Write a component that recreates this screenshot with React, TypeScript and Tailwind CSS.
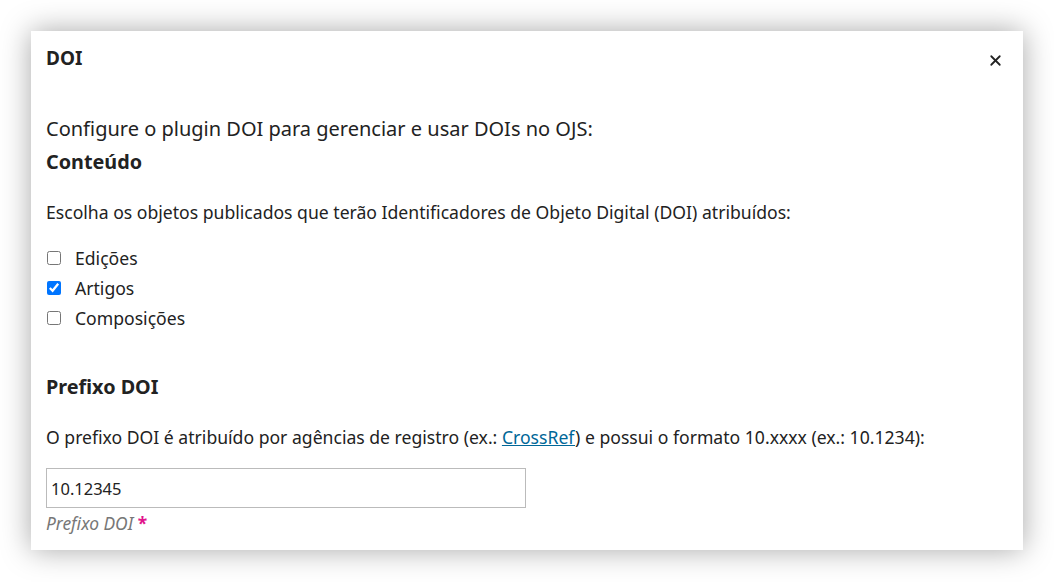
import { X } from "lucide-react";

const font = { fontFamily: '"Noto Sans", "Open Sans", sans-serif' };

function Check({ label, checked = false }: { label: string; checked?: boolean }) {
  return (
    <label className="flex h-[30px] items-center gap-[14px]">
      <input
        type="checkbox"
        defaultChecked={checked}
        className="ml-[1px] h-[14px] w-[14px] accent-[#0075ff]"
      />
      <span>{label}</span>
    </label>
  );
}

export default function App() {
  return (
    <div className="h-[582px] w-[1054px] bg-white pt-[31px] pl-[31px] text-[#222]" style={font}>
      <div className="flex h-[519px] w-[992px] flex-col bg-white px-[15px] shadow-[0_0_28px_rgba(0,0,0,0.35)]">
        <div className="flex h-[54px] items-center justify-between">
          <h1 className="text-[19px] font-bold">DOI</h1>
          <button className="mr-[4px] mt-[4px] text-[#222]">
            <X size={17} strokeWidth={2.5} />
          </button>
        </div>
        <p className="mt-[30px] text-[20px] leading-[28px]">
          Configure o plugin DOI para gerenciar e usar DOIs no OJS:
        </p>
        <h2 className="mt-[5px] text-[19.8px] font-bold leading-[28px]">Conteúdo</h2>
        <p className="mt-[23px] text-[17.6px] leading-[26px]">
          Escolha os objetos publicados que terão Identificadores de Objeto Digital (DOI) atribuídos:
        </p>
        <div className="mt-[18px] flex flex-col text-[17.6px]">
          <Check label="Edições" />
          <Check label="Artigos" checked />
          <Check label="Composições" />
        </div>
        <h2 className="mt-[40px] text-[19.8px] font-bold leading-[28px]">Prefixo DOI</h2>
        <p className="mt-[23px] text-[17.6px] leading-[26px]">
          O prefixo DOI é atribuído por agências de registro (ex.:{" "}
          <a href="#" className="text-[#006798] underline">
            CrossRef
          </a>
          ) e possui o formato 10.xxxx (ex.: 10.1234):
        </p>
        <input
          defaultValue="10.12345"
          className="mt-[18px] h-[40px] w-[480px] border border-[#bbb] px-[4px] text-[16.5px] text-[#222] outline-none"
        />
        <div className="mt-[3px] text-[17.4px] italic leading-[24px] text-[#777]">
          Prefixo DOI <span className="not-italic font-bold text-[#e1148c]">*</span>
        </div>
      </div>
    </div>
  );
}
